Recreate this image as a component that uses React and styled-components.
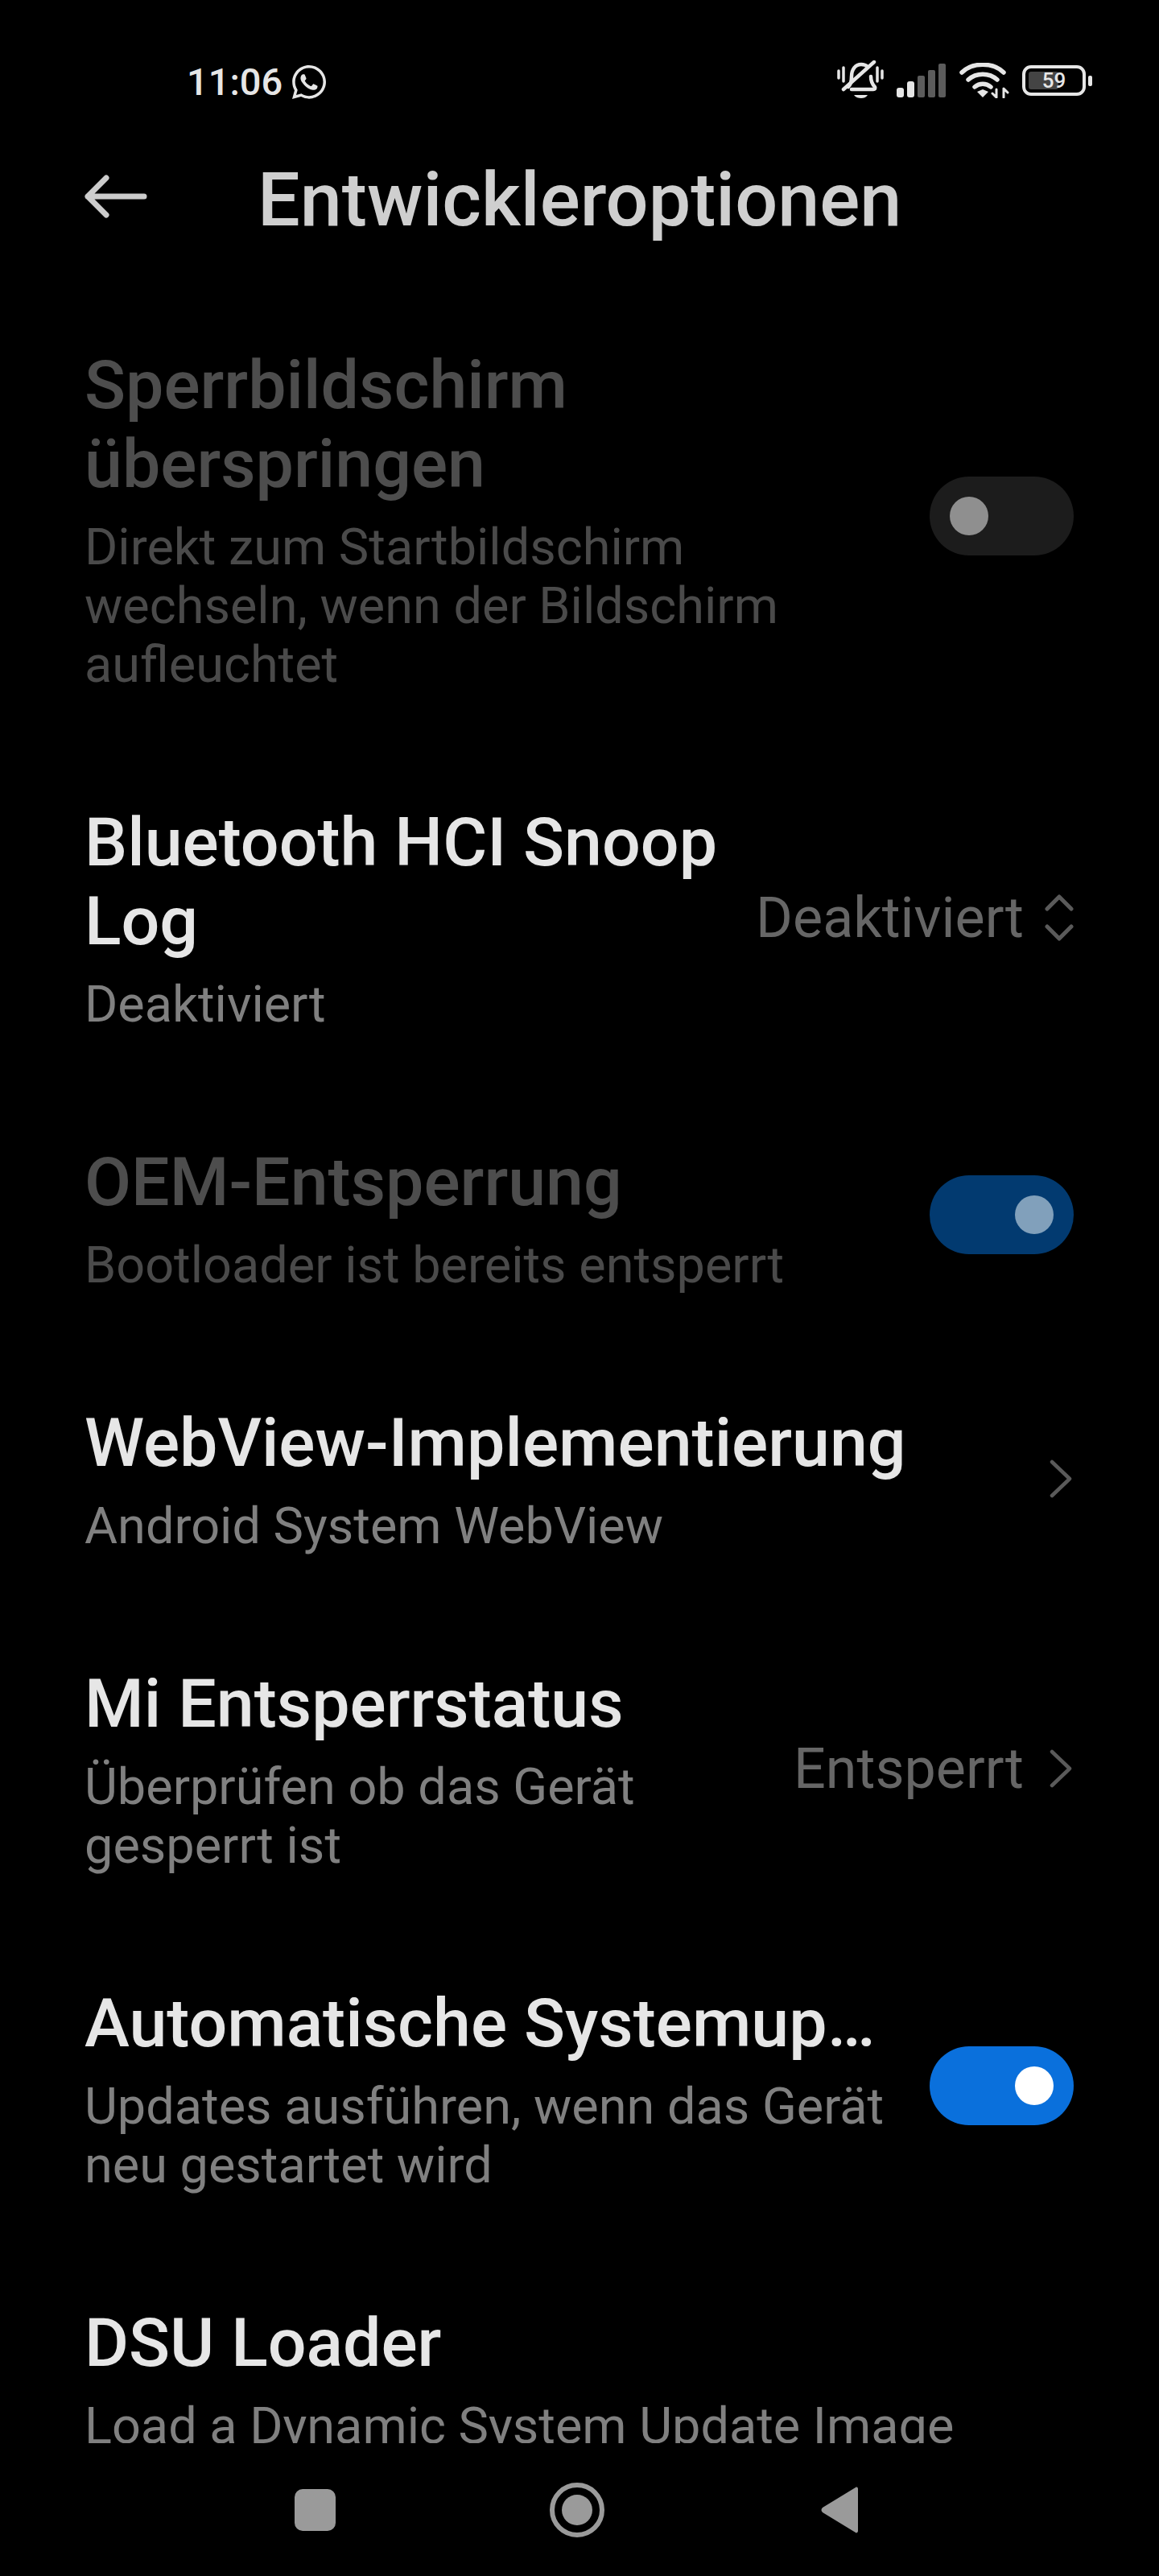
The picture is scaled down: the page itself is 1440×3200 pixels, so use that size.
import React from "react";
import styled, { createGlobalStyle } from "styled-components";
import { FaWhatsapp } from "react-icons/fa";

const GlobalStyle = createGlobalStyle`
  html, body {
    margin: 0;
    background: #000;
  }
  * {
    box-sizing: border-box;
  }
`;

const Screen = styled.div`
  width: 1440px;
  height: 3200px;
  background: #000;
  display: flex;
  flex-direction: column;
  overflow: hidden;
  font-family: Roboto, "Liberation Sans", sans-serif;
`;

const StatusBar = styled.div`
  height: 200px;
  flex: none;
  display: flex;
  align-items: flex-start;
  justify-content: space-between;
  padding: 78px 83px 0 232px;
  color: #e6e6e6;
`;

const TimeGroup = styled.div`
  display: flex;
  align-items: center;
  gap: 9px;
  font-size: 47px;
  line-height: 44px;
  font-weight: 500;
`;

const StatusIcons = styled.div`
  display: flex;
  align-items: center;
  gap: 16px;
  height: 44px;
`;

const Battery = styled.div`
  display: flex;
  align-items: center;
  gap: 3px;
`;

const BatteryBody = styled.div`
  position: relative;
  width: 79px;
  height: 38px;
  border: 4px solid #e6e6e6;
  border-radius: 11px;
  padding: 4px;
`;

const BatteryFill = styled.div`
  width: 59%;
  height: 100%;
  background: #444;
  border-radius: 3px;
`;

const BatteryLabel = styled.span`
  position: absolute;
  inset: 0;
  display: flex;
  align-items: center;
  justify-content: center;
  font-size: 26px;
  font-weight: 500;
  color: #e6e6e6;
`;

const BatteryNub = styled.div`
  width: 5px;
  height: 13px;
  border-radius: 2px;
  background: #e6e6e6;
`;

const Header = styled.div`
  height: 162px;
  flex: none;
  display: flex;
  align-items: flex-start;
  padding-left: 103px;
`;

const BackButton = styled.div`
  width: 217px;
  padding-top: 17px;
  display: flex;
`;

const Title = styled.h1`
  margin: 0;
  font-size: 93.5px;
  line-height: 96px;
  font-weight: 500;
  color: #cfcfcf;
  white-space: nowrap;
`;

const List = styled.div`
  flex: 1;
  min-height: 0;
  overflow: hidden;
`;

const Row = styled.div`
  display: flex;
  align-items: center;
  justify-content: space-between;
  padding: 68px 106px 68px 105px;
`;

const RowText = styled.div`
  flex: 1;
  min-width: 0;
  white-space: nowrap;
`;

const RowTitle = styled.div`
  font-size: 84.3px;
  line-height: 98px;
  font-weight: 500;
  color: ${(p) => (p.$disabled ? "#4d4d4d" : "#e6e6e6")};
`;

const RowSub = styled.div`
  margin-top: 17px;
  font-size: 63px;
  line-height: 73px;
  color: ${(p) => (p.$disabled ? "#4a4a4a" : "#808080")};
`;

const RowValue = styled.div`
  flex: none;
  display: flex;
  align-items: center;
  gap: ${(p) => p.$gap}px;
  margin-top: -3px;
  font-size: 70px;
  line-height: 80px;
  color: #666;
`;

const Toggle = styled.div`
  flex: none;
  width: 179px;
  height: 98px;
  border-radius: 49px;
  display: flex;
  align-items: center;
  justify-content: ${(p) => (p.$on ? "flex-end" : "flex-start")};
  padding: 0 25px;
  background: ${(p) => p.$bg};
  margin-top: -10px;
`;

const Knob = styled.div`
  width: 48px;
  height: 48px;
  border-radius: 50%;
  background: ${(p) => p.$color};
`;

const NavBar = styled.div`
  height: 165px;
  flex: none;
  display: flex;
  align-items: center;
  padding-left: 366px;
`;

const NavSlot = styled.div`
  width: ${(p) => p.$w}px;
  display: flex;
`;

const BellOff = () => (
  <svg width="58" height="50" viewBox="0 0 58 50" fill="none" stroke="#e6e6e6" strokeLinecap="round" strokeLinejoin="round">
    <path d="M2 13v9M8 9v17M50 9v17M56 13v9" strokeWidth="3.5" />
    <path d="M14 33c3-3 4-6 4-13 0-9 5-15 12-15 3 0 6 1 8 3M42 20c0 6 2 10 5 13 1 2 0 3-2 3H18" strokeWidth="4.5" />
    <path d="M8 36 46 2" strokeWidth="4.5" />
    <path d="M21 43h17c-2 3-5 4-8 4s-7-1-9-4z" fill="#e6e6e6" stroke="none" />
  </svg>
);

const Signal = () => (
  <svg width="62" height="42" viewBox="0 0 62 42">
    <rect x="0" y="30" width="9" height="12" rx="3" fill="#e6e6e6" />
    <rect x="13" y="22" width="9" height="20" rx="3" fill="#e6e6e6" />
    <rect x="26" y="15" width="9" height="27" rx="2" fill="#5c5c5c" />
    <rect x="39" y="8" width="9" height="34" rx="2" fill="#5c5c5c" />
    <rect x="52" y="0" width="9" height="42" rx="2" fill="#5c5c5c" />
  </svg>
);

const Wifi = () => (
  <svg width="62" height="44" viewBox="0 0 62 44" fill="none" stroke="#e6e6e6" strokeLinecap="round">
    <path d="M3 12C16-1 42-1 55 12" strokeWidth="5.5" />
    <path d="M11 21C21 12 37 12 47 21" strokeWidth="5.5" />
    <path d="M19 30c6-5 14-5 20 0" strokeWidth="5.5" />
    <path d="M22 36l7-3 7 3-7 7z" fill="#e6e6e6" stroke="none" />
    <path d="M46 33v10M41 38l5 5M55 43V32M55 32l5 5" strokeWidth="3" />
  </svg>
);

const BackArrow = () => (
  <svg width="80" height="54" viewBox="0 0 80 54" fill="none" stroke="#cccccc" strokeWidth="7" strokeLinecap="round" strokeLinejoin="round">
    <path d="M76 27H6M29 4 6 27l23 23" />
  </svg>
);

const UpDown = () => (
  <svg width="36" height="60" viewBox="0 0 36 60" fill="none" stroke="#5a5a5a" strokeWidth="5" strokeLinecap="round" strokeLinejoin="round">
    <path d="M3 19 18 4l15 15M3 41l15 15 15-15" />
  </svg>
);

const ChevronRight = () => (
  <svg width="30" height="50" viewBox="0 0 30 50" fill="none" stroke="#5a5a5a" strokeWidth="4.5" strokeLinecap="round" strokeLinejoin="round">
    <path d="M3 4l22 21L3 46" />
  </svg>
);

const App = () => (
  <Screen>
    <GlobalStyle />
    <StatusBar>
      <TimeGroup>
        11:06
        <FaWhatsapp size={48} />
      </TimeGroup>
      <StatusIcons>
        <BellOff />
        <Signal />
        <Wifi />
        <Battery>
          <BatteryBody>
            <BatteryFill />
            <BatteryLabel>59</BatteryLabel>
          </BatteryBody>
          <BatteryNub />
        </Battery>
      </StatusIcons>
    </StatusBar>

    <Header>
      <BackButton>
        <BackArrow />
      </BackButton>
      <Title>Entwickleroptionen</Title>
    </Header>

    <List>
      <Row>
        <RowText>
          <RowTitle $disabled>
            Sperrbildschirm
            <br />
            überspringen
          </RowTitle>
          <RowSub $disabled>
            Direkt zum Startbildschirm
            <br />
            wechseln, wenn der Bildschirm
            <br />
            aufleuchtet
          </RowSub>
        </RowText>
        <Toggle $bg="#1c1c1c">
          <Knob $color="#8f8f8f" />
        </Toggle>
      </Row>

      <Row>
        <RowText>
          <RowTitle>
            Bluetooth HCI Snoop
            <br />
            Log
          </RowTitle>
          <RowSub>Deaktiviert</RowSub>
        </RowText>
        <RowValue $gap={26}>
          Deaktiviert
          <UpDown />
        </RowValue>
      </Row>

      <Row>
        <RowText>
          <RowTitle $disabled>OEM-Entsperrung</RowTitle>
          <RowSub $disabled>Bootloader ist bereits entsperrt</RowSub>
        </RowText>
        <Toggle $on $bg="#023a70">
          <Knob $color="#81a0bb" />
        </Toggle>
      </Row>

      <Row>
        <RowText>
          <RowTitle>WebView-Implementierung</RowTitle>
          <RowSub>Android System WebView</RowSub>
        </RowText>
        <RowValue $gap={0}>
          <ChevronRight />
        </RowValue>
      </Row>

      <Row>
        <RowText>
          <RowTitle>Mi Entsperrstatus</RowTitle>
          <RowSub>
            Überprüfen ob das Gerät
            <br />
            gesperrt ist
          </RowSub>
        </RowText>
        <RowValue $gap={32}>
          Entsperrt
          <ChevronRight />
        </RowValue>
      </Row>

      <Row>
        <RowText>
          <RowTitle>Automatische Systemup…</RowTitle>
          <RowSub>
            Updates ausführen, wenn das Gerät
            <br />
            neu gestartet wird
          </RowSub>
        </RowText>
        <Toggle $on $bg="#0a70dc">
          <Knob $color="#ffffff" />
        </Toggle>
      </Row>

      <Row>
        <RowText>
          <RowTitle>DSU Loader</RowTitle>
          <RowSub>Load a Dynamic System Update Image</RowSub>
        </RowText>
      </Row>
    </List>

    <NavBar>
      <NavSlot $w={317}>
        <svg width="51" height="52" viewBox="0 0 51 52">
          <rect width="51" height="52" rx="10" fill="#9a9a9a" />
        </svg>
      </NavSlot>
      <NavSlot $w={337}>
        <svg width="68" height="68" viewBox="0 0 68 68">
          <circle cx="34" cy="34" r="31" fill="none" stroke="#9a9a9a" strokeWidth="6" />
          <circle cx="34" cy="34" r="19" fill="#9a9a9a" />
        </svg>
      </NavSlot>
      <NavSlot $w={50}>
        <svg width="46" height="58" viewBox="0 0 46 58">
          <path d="M43 1c2-1 3 0 3 2v52c0 2-2 3-3 2L2 32c-2-2-2-4 0-6z" fill="#9a9a9a" />
        </svg>
      </NavSlot>
    </NavBar>
  </Screen>
);

export default App;
